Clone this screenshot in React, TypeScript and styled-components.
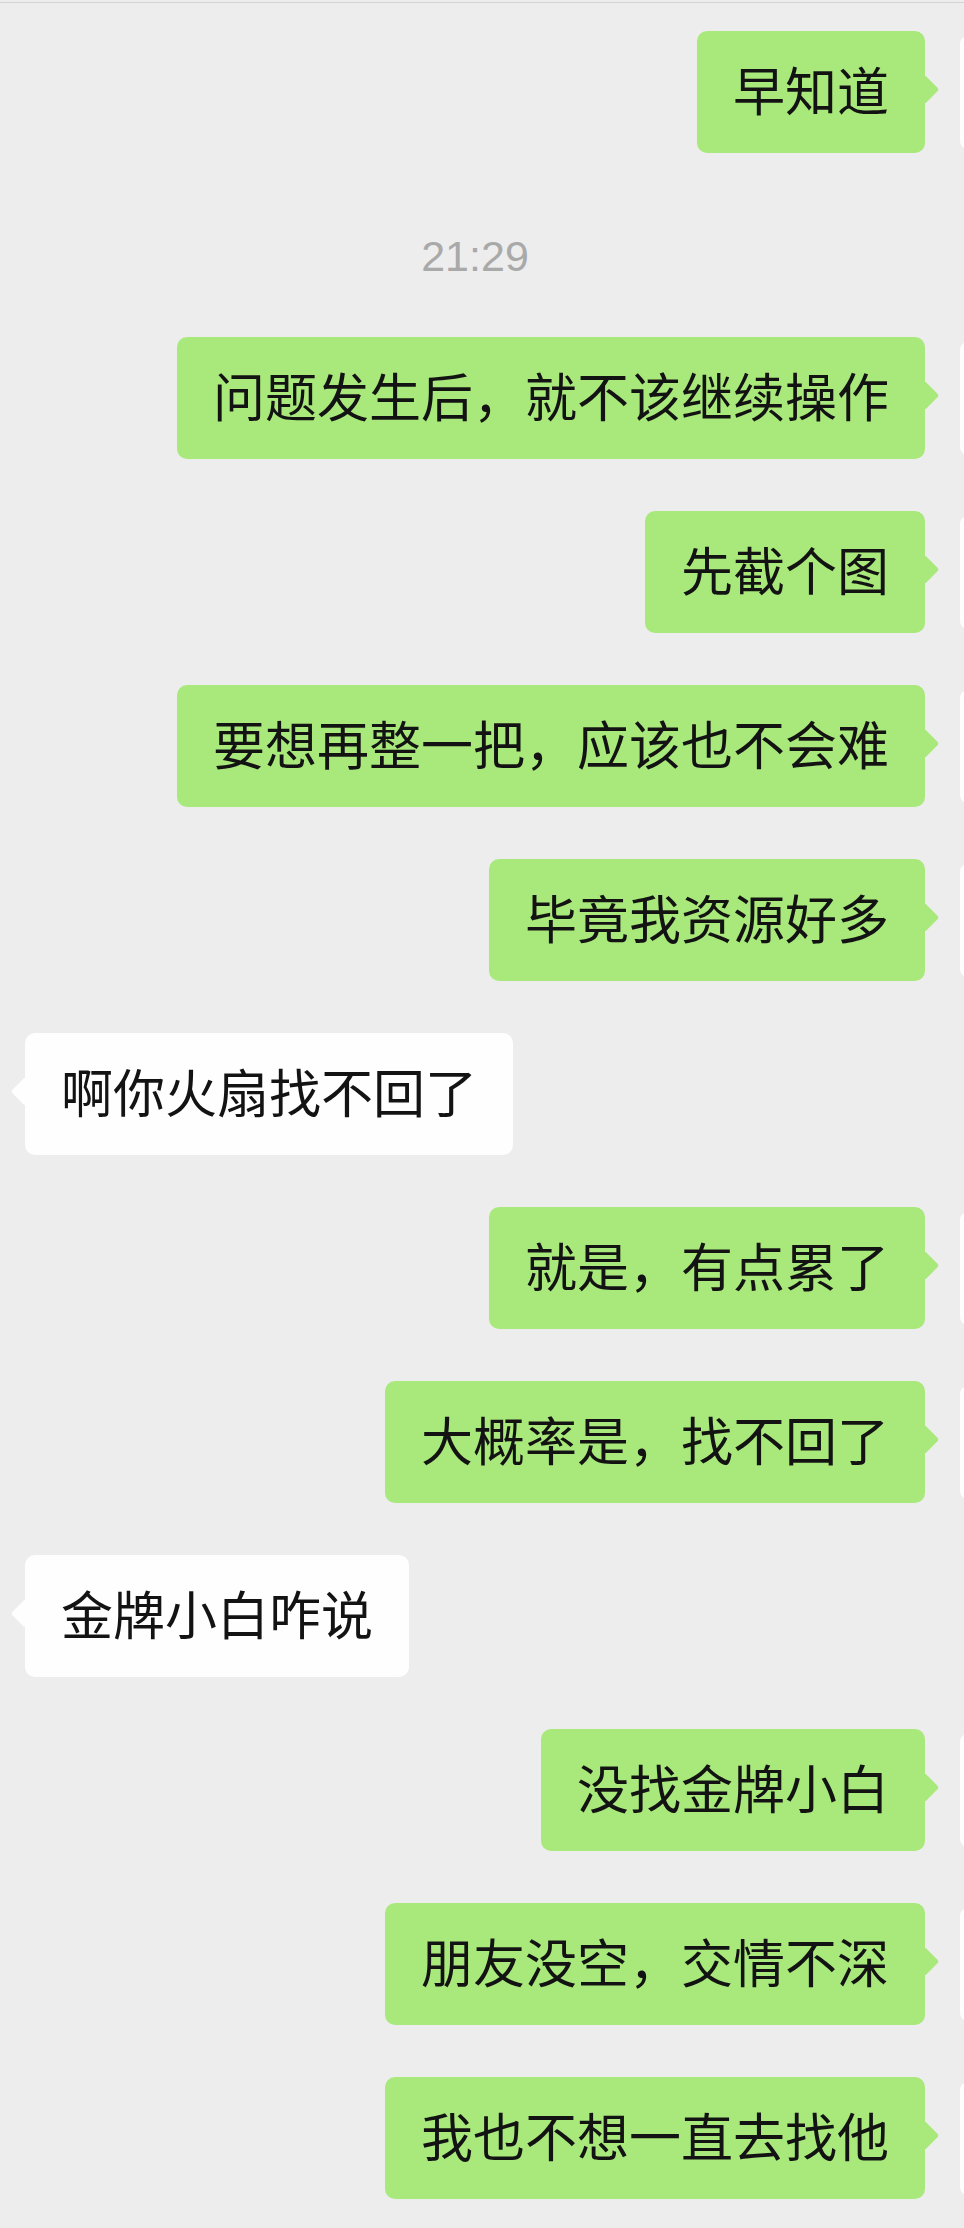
import styled, { createGlobalStyle } from "styled-components";

type Side = "me" | "them";

type Item =
  | { kind: "time"; text: string }
  | { kind: "msg"; side: Side; text: string };

const items: Item[] = [
  { kind: "msg", side: "me", text: "早知道" },
  { kind: "time", text: "21:29" },
  { kind: "msg", side: "me", text: "问题发生后，就不该继续操作" },
  { kind: "msg", side: "me", text: "先截个图" },
  { kind: "msg", side: "me", text: "要想再整一把，应该也不会难" },
  { kind: "msg", side: "me", text: "毕竟我资源好多" },
  { kind: "msg", side: "them", text: "啊你火扇找不回了" },
  { kind: "msg", side: "me", text: "就是，有点累了" },
  { kind: "msg", side: "me", text: "大概率是，找不回了" },
  { kind: "msg", side: "them", text: "金牌小白咋说" },
  { kind: "msg", side: "me", text: "没找金牌小白" },
  { kind: "msg", side: "me", text: "朋友没空，交情不深" },
  { kind: "msg", side: "me", text: "我也不想一直去找他" },
];

const GlobalStyle = createGlobalStyle`
  html, body {
    margin: 0;
    padding: 0;
    background: #ededed;
  }
  body {
    font-family: "Noto Sans CJK SC", "Noto Sans", sans-serif;
  }
`;

const Screen = styled.div`
  width: 964px;
  min-height: 2228px;
  background: #ededed;
  overflow: hidden;
  border-top: 2px solid #ededed;
  box-sizing: border-box;
  position: relative;

  &::before {
    content: "";
    display: block;
    height: 1px;
    background: #d4d4d4;
  }
`;

const List = styled.div`
  display: flex;
  flex-direction: column;
  gap: 52px;
  padding-top: 28px;
`;

const Row = styled.div<{ $side: Side }>`
  display: flex;
  flex-direction: ${(p) => (p.$side === "me" ? "row-reverse" : "row")};
  align-items: flex-start;
  gap: 35px;
  ${(p) => (p.$side === "me" ? "margin-right: -108px;" : "margin-left: -122px;")}
`;

const Avatar = styled.div`
  flex: none;
  width: 112px;
  height: 113px;
  margin-top: 5px;
  border-radius: 8px;
  background: #fdfdfd;
`;

const Bubble = styled.div<{ $side: Side }>`
  position: relative;
  height: 122px;
  padding: 0 36px;
  box-sizing: border-box;
  border-radius: 10px;
  background: ${(p) => (p.$side === "me" ? "#a9e97b" : "#fefefe")};
  color: #131313;
  font-size: 52px;
  line-height: 116px;
  white-space: nowrap;

  &::after {
    content: "";
    position: absolute;
    top: 48px;
    ${(p) => (p.$side === "me" ? "right: -10px;" : "left: -10px;")}
    width: 21px;
    height: 21px;
    border-radius: 3px;
    background: inherit;
    transform: rotate(45deg);
  }
`;

const Time = styled.div`
  text-align: center;
  padding-right: 14px;
  margin: 21px 0 -1px;
  font-family: "Liberation Sans", Arial, sans-serif;
  font-size: 43px;
  line-height: 60px;
  color: #a9a9a9;
`;

export default function App() {
  return (
    <>
      <GlobalStyle />
      <Screen>
        <List>
          {items.map((it, i) =>
            it.kind === "time" ? (
              <Time key={i}>{it.text}</Time>
            ) : (
              <Row key={i} $side={it.side}>
                <Avatar />
                <Bubble $side={it.side}>{it.text}</Bubble>
              </Row>
            )
          )}
        </List>
      </Screen>
    </>
  );
}
